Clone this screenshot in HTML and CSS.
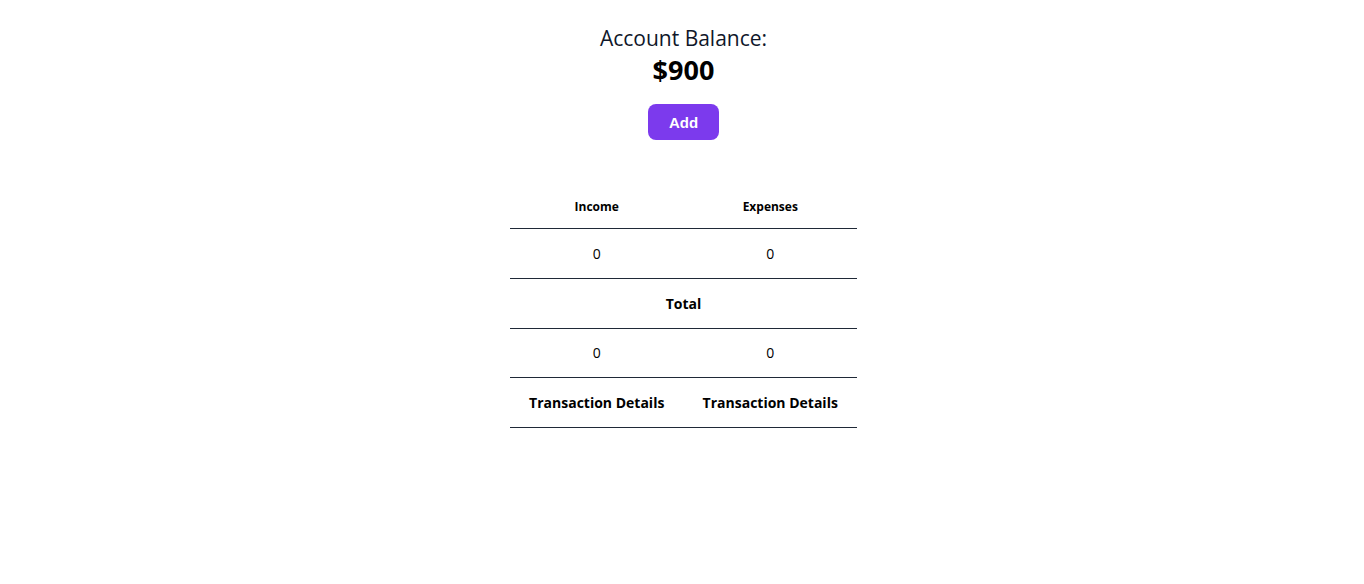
FILE: index.html
```html
<!DOCTYPE html>
<html>
<head>
<meta charset="utf-8">
<link rel="stylesheet" href="styles.css">
</head>
<body>
<main class="page">
  <section class="balance">
    <h2 class="balance-label">Account Balance:</h2>
    <h1 class="balance-amount">$900</h1>
    <button class="add-btn">Add</button>
  </section>
  <table class="summary">
    <thead>
      <tr><th>Income</th><th>Expenses</th></tr>
    </thead>
    <tbody>
      <tr><td>0</td><td>0</td></tr>
      <tr><td colspan="2" class="bold">Total</td></tr>
      <tr class="short"><td>0</td><td>0</td></tr>
      <tr><td class="bold">Transaction Details</td><td class="bold">Transaction Details</td></tr>
    </tbody>
  </table>
</main>
</body>
</html>
```
FILE: styles.css
```css
* { box-sizing: border-box; }
html, body { margin: 0; padding: 0; background: #fff; }
body {
  font-family: "Open Sans", "Noto Sans", sans-serif;
  color: #000;
}
.page {
  display: flex;
  flex-direction: column;
  align-items: center;
  padding-top: 23px;
  padding-left: 3px;
}
.balance {
  display: flex;
  flex-direction: column;
  align-items: center;
}
.balance-label {
  margin: 0;
  font-size: 21px;
  font-weight: 400;
  line-height: 30px;
  color: #0f172a;
}
.balance-amount {
  margin: 0;
  font-size: 27px;
  font-weight: 700;
  line-height: 34px;
}
.add-btn {
  margin-top: 17px;
  width: 71px;
  height: 36px;
  border: none;
  border-radius: 8px;
  background: #7c3aed;
  color: #fff;
  font-family: "Liberation Sans", Arial, sans-serif;
  font-weight: 700;
  font-size: 15px;
}
.summary {
  margin-top: 50px;
  width: 347px;
  border-collapse: collapse;
  table-layout: fixed;
}
.summary th {
  font-size: 12px;
  font-weight: 700;
  height: 38px;
  padding: 0 0 4px;
  border-bottom: 1px solid #1f2937;
}
.summary td {
  text-align: center;
  font-size: 14px;
  height: 50px;
  border-bottom: 1px solid #1f2937;
  padding: 0;
}
.summary tr.short td { height: 49px; }
.summary td.bold { font-weight: 700; }
```
